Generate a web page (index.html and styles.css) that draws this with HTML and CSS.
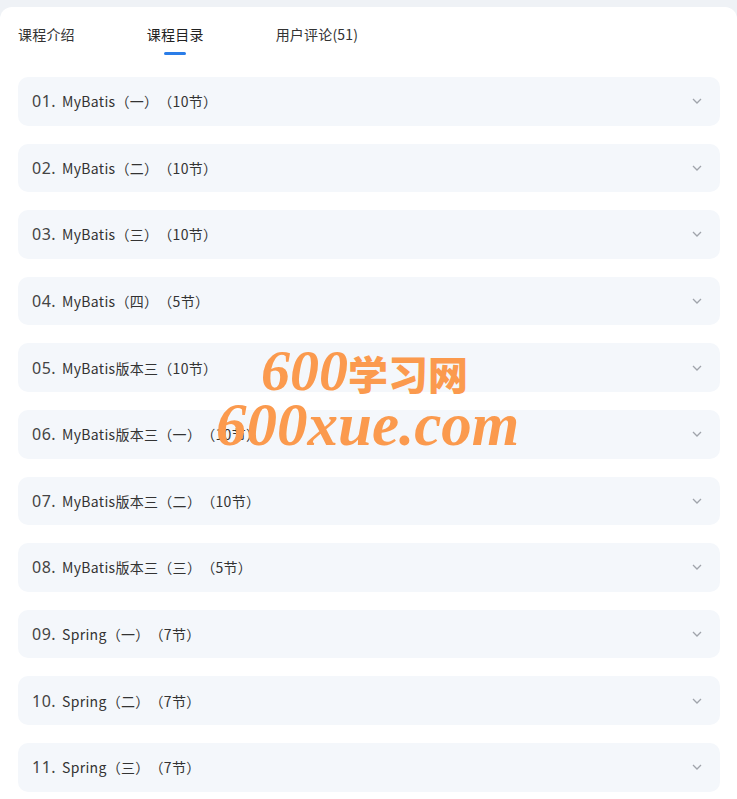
FILE: index.html
```html
<!DOCTYPE html>
<html lang="zh-CN">
<head>
<meta charset="utf-8">
<title>课程目录</title>
<link rel="stylesheet" href="styles.css">
</head>
<body>
<div class="card">
  <nav class="tabs">
    <div class="tab">课程介绍</div>
    <div class="tab active">课程目录</div>
    <div class="tab">用户评论(51)</div>
  </nav>
  <ul class="chapters">
    <li class="chapter"><span class="num">01.</span><span class="title">MyBatis（一）（10节）</span><svg class="chev" viewBox="0 0 10 6"><path d="M1 1l4 4 4-4"/></svg></li>
    <li class="chapter"><span class="num">02.</span><span class="title">MyBatis（二）（10节）</span><svg class="chev" viewBox="0 0 10 6"><path d="M1 1l4 4 4-4"/></svg></li>
    <li class="chapter"><span class="num">03.</span><span class="title">MyBatis（三）（10节）</span><svg class="chev" viewBox="0 0 10 6"><path d="M1 1l4 4 4-4"/></svg></li>
    <li class="chapter"><span class="num">04.</span><span class="title">MyBatis（四）（5节）</span><svg class="chev" viewBox="0 0 10 6"><path d="M1 1l4 4 4-4"/></svg></li>
    <li class="chapter"><span class="num">05.</span><span class="title">MyBatis版本三（10节）</span><svg class="chev" viewBox="0 0 10 6"><path d="M1 1l4 4 4-4"/></svg></li>
    <li class="chapter"><span class="num">06.</span><span class="title">MyBatis版本三（一）（10节）</span><svg class="chev" viewBox="0 0 10 6"><path d="M1 1l4 4 4-4"/></svg></li>
    <li class="chapter"><span class="num">07.</span><span class="title">MyBatis版本三（二）（10节）</span><svg class="chev" viewBox="0 0 10 6"><path d="M1 1l4 4 4-4"/></svg></li>
    <li class="chapter"><span class="num">08.</span><span class="title">MyBatis版本三（三）（5节）</span><svg class="chev" viewBox="0 0 10 6"><path d="M1 1l4 4 4-4"/></svg></li>
    <li class="chapter"><span class="num">09.</span><span class="title">Spring（一）（7节）</span><svg class="chev" viewBox="0 0 10 6"><path d="M1 1l4 4 4-4"/></svg></li>
    <li class="chapter"><span class="num">10.</span><span class="title">Spring（二）（7节）</span><svg class="chev" viewBox="0 0 10 6"><path d="M1 1l4 4 4-4"/></svg></li>
    <li class="chapter"><span class="num">11.</span><span class="title">Spring（三）（7节）</span><svg class="chev" viewBox="0 0 10 6"><path d="M1 1l4 4 4-4"/></svg></li>
  </ul>
  <div class="watermark">
    <div class="wm-line1">600<span class="wm-cjk">学习网</span></div>
    <div class="wm-line2">600xue.com</div>
  </div>
</div>
</body>
</html>
```
FILE: styles.css
```css
html, body {
  margin: 0;
  padding: 0;
}
body {
  background: #eff2f6;
  font-family: "Noto Sans CJK SC", "Noto Sans", sans-serif;
  color: #333;
  overflow: hidden;
  text-spacing-trim: space-all;
}
.card {
  position: relative;
  margin-top: 7px;
  background: #fff;
  border-radius: 12px 12px 0 0;
  padding: 0 17px 40px 18px;
  min-height: 900px;
}
.tabs {
  display: flex;
  gap: 72px;
  height: 70px;
  padding-top: 16px;
  box-sizing: border-box;
}
.tab {
  position: relative;
  font-size: 14px;
  line-height: 22px;
  color: #333;
  height: 22px;
  letter-spacing: 0.2px;
}
.tab.active {
  color: #222;
}
.tab.active::after {
  content: "";
  position: absolute;
  left: 50%;
  top: 29px;
  width: 22px;
  height: 3px;
  margin-left: -11px;
  background: #2a7de8;
  border-radius: 2px;
}
.chapters {
  list-style: none;
  margin: 0;
  padding: 0;
  display: flex;
  flex-direction: column;
  gap: 18px;
}
.chapter {
  display: flex;
  align-items: center;
  height: 48.6px;
  background: #f4f7fb;
  border-radius: 10px;
  padding: 0 18px 0 14px;
}
.num {
  font-family: "Noto Sans", sans-serif;
  font-size: 16px;
  color: #444;
  margin-right: 6px;
  letter-spacing: 0.5px;
}
.title {
  font-size: 14px;
  color: #333;
  flex: 1;
  letter-spacing: 0.3px;
  text-spacing-trim: space-all;
}
.chev {
  width: 10px;
  height: 6px;
  fill: none;
  stroke: #a0a4ab;
  stroke-width: 1.3;
}
.watermark {
  position: absolute;
  left: 216px;
  top: 338px;
  width: 330px;
  pointer-events: none;
  color: #fb9a4e;
  font-family: "Liberation Serif", "Noto Sans CJK SC", serif;
  font-weight: bold;
  font-style: italic;
  font-size: 58px;
  line-height: 52px;
}
.wm-line1 {
  padding-left: 45px;
}
.wm-cjk {
  font-family: "Noto Sans CJK SC", sans-serif;
  font-style: normal;
  font-size: 40px;
  font-weight: 900;
}
.wm-line2 {
  font-size: 61px;
}
```
